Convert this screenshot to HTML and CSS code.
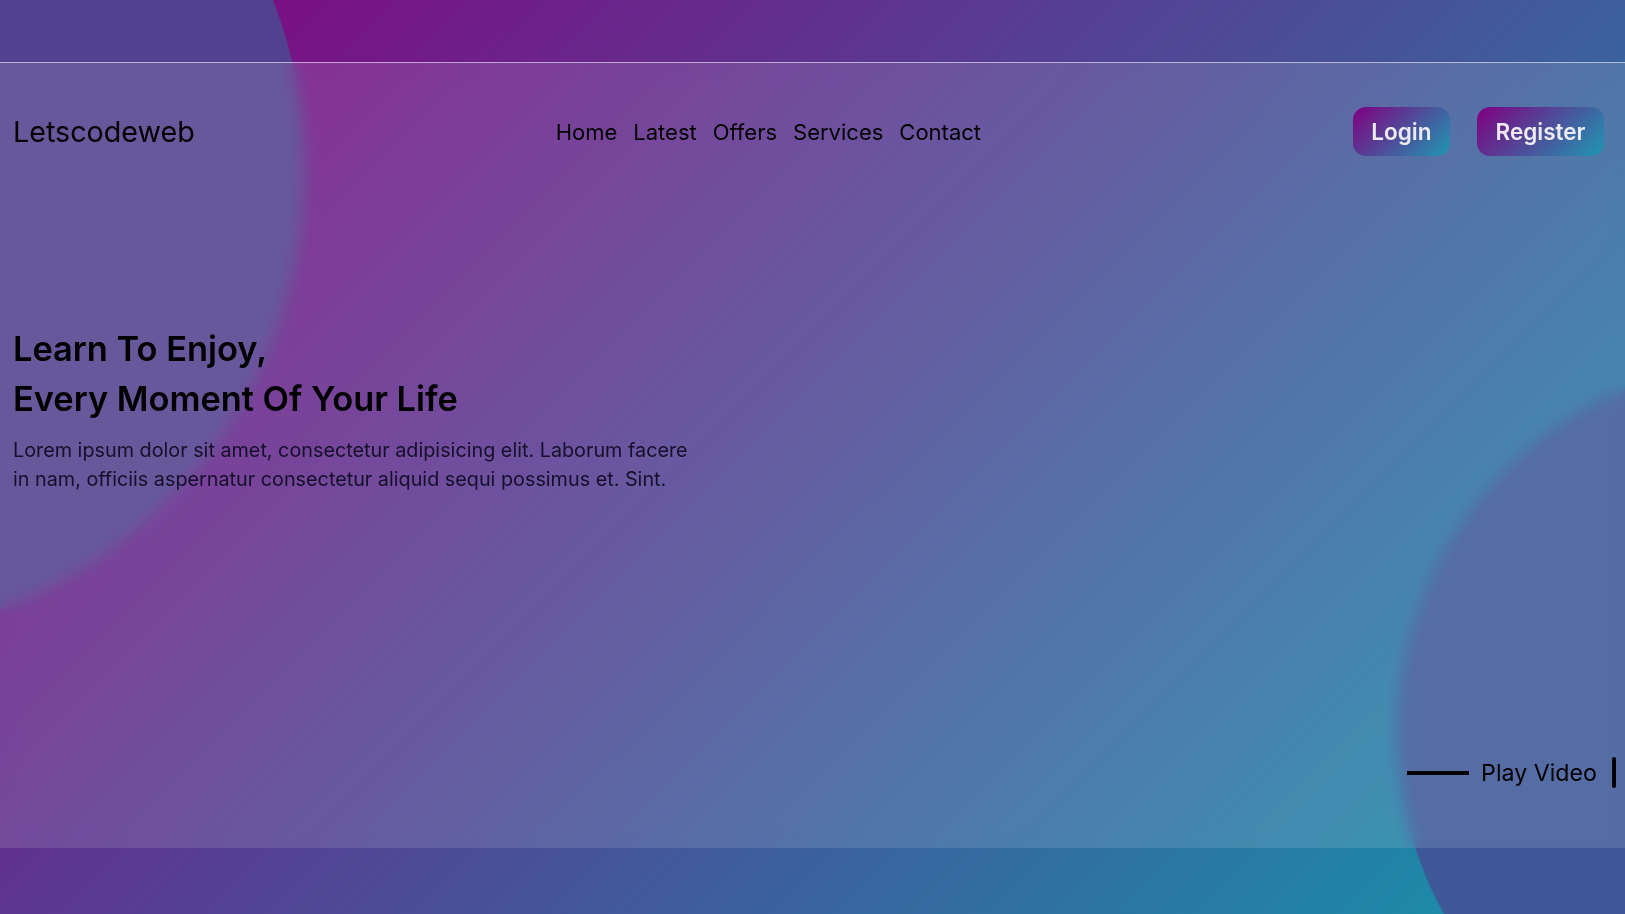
FILE: index.html
```html
<!DOCTYPE html>
<html lang="en">
<head>
<meta charset="utf-8">
<title>Letscodeweb</title>
<link rel="stylesheet" href="styles.css">
</head>
<body>
<main class="glass">
  <header class="topbar">
    <div class="logo">Letscodeweb</div>
    <nav class="nav">
      <a href="#">Home</a>
      <a href="#">Latest</a>
      <a href="#">Offers</a>
      <a href="#">Services</a>
      <a href="#">Contact</a>
    </nav>
    <div class="actions">
      <button class="btn">Login</button>
      <button class="btn">Register</button>
    </div>
  </header>
  <section class="hero">
    <h1>Learn To Enjoy,<br>Every Moment Of Your Life</h1>
    <p>Lorem ipsum dolor sit amet, consectetur adipisicing elit. Laborum facere<br>in nam, officiis aspernatur consectetur aliquid sequi possimus et. Sint.</p>
  </section>
  <div class="play">
    <span class="play-line"></span>
    <span class="play-text">Play Video</span>
    <span class="play-bar"></span>
  </div>
</main>
</body>
</html>
```
FILE: styles.css
```css
* { box-sizing: border-box; }
html, body { margin: 0; height: 100%; }
body {
  overflow: hidden;
  padding-top: 62px;
  font-family: "Inter", "Noto Sans", sans-serif;
  color: #000;
  background:
    radial-gradient(circle 470px at -165px 170px, #52418f 469px, rgba(82, 65, 143, 0) 470.5px),
    radial-gradient(circle 375px at 1772px 733px, #3e5898 374px, rgba(62, 88, 152, 0) 375.5px),
    linear-gradient(135deg, #860080 0%, #1594ac 100%);
}
.glass {
  height: 786px;
  display: flex;
  flex-direction: column;
  background: rgba(255, 255, 255, 0.12);
  backdrop-filter: blur(8px);
  -webkit-backdrop-filter: blur(8px);
  border-top: 1px solid rgba(255, 255, 255, 0.55);
}
.topbar {
  display: flex;
  align-items: center;
  justify-content: space-between;
  padding: 44px 21px 0 13px;
}
.logo { font-size: 28.7px; }
.nav { display: flex; gap: 16px; margin-right: 11px; }
.nav a { color: #000; text-decoration: none; font-size: 22px; }
.actions { display: flex; gap: 27px; }
.btn {
  height: 49px;
  padding: 0 18.5px;
  border: none;
  border-radius: 13px;
  font-family: inherit;
  font-size: 22.5px;
  font-weight: 600;
  color: #ecebf3;
  background: linear-gradient(135deg, #800080 0%, #1e98b2 100%);
}
.hero { padding-left: 13px; margin-top: 168px; }
.hero h1 { margin: 0; font-size: 34.4px; line-height: 50px; font-weight: 600; }
.hero p { margin: 12px 0 0; font-size: 19.8px; line-height: 29px; color: #15102a; }
.play {
  margin-top: auto;
  margin-bottom: 60px;
  align-self: flex-end;
  display: flex;
  align-items: center;
  padding-right: 9px;
}
.play-line { width: 62px; height: 4px; background: #000; }
.play-text { margin: 0 15px 0 12px; font-size: 23.2px; }
.play-bar { width: 4px; height: 31px; border-radius: 2px; background: #000; }
```
